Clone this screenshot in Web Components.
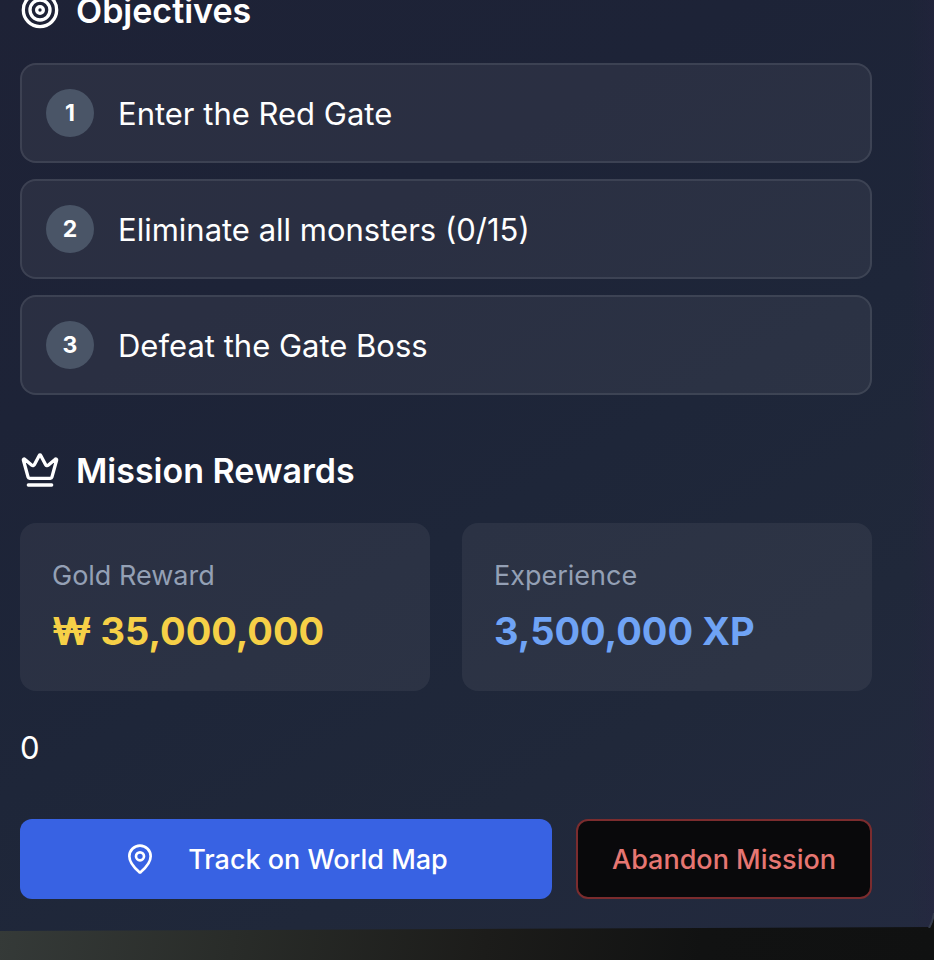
<!DOCTYPE html>
<html lang="en">
<head>
<meta charset="utf-8">
<meta name="viewport" content="width=device-width, initial-scale=1">
<title>Mission details</title>
<style>
  html { background: #101111; }
  body { margin: 0; min-height: 100vh; overflow: hidden; display: flex; font-family: Inter, "Noto Sans CJK KR", sans-serif; color: #fff; }
</style>
</head>
<body>
<mission-panel>
  <mission-section heading="Objectives" icon="target">
    <objective-list>
      <objective-item number="1">Enter the Red Gate</objective-item>
      <objective-item number="2">Eliminate all monsters (0/15)</objective-item>
      <objective-item number="3">Defeat the Gate Boss</objective-item>
    </objective-list>
  </mission-section>
  <mission-section heading="Mission Rewards" icon="crown">
    <reward-grid>
      <reward-card label="Gold Reward" tone="gold">₩ 35,000,000</reward-card>
      <reward-card label="Experience" tone="xp">3,500,000 XP</reward-card>
    </reward-grid>
  </mission-section>
  <mission-count>0</mission-count>
  <mission-actions>
    <action-button variant="primary" icon="pin">Track on World Map</action-button>
    <action-button variant="danger">Abandon Mission</action-button>
  </mission-actions>
</mission-panel>
<script>
const ICONS = {
  target: '<circle cx="12" cy="12" r="10"/><circle cx="12" cy="12" r="6"/><circle cx="12" cy="12" r="2"/>',
  crown: '<path d="M11.562 3.266a.5.5 0 0 1 .876 0L15.39 8.87a1 1 0 0 0 1.516.294L21.183 5.5a.5.5 0 0 1 .798.519l-2.834 10.246a1 1 0 0 1-.956.734H5.81a1 1 0 0 1-.957-.734L2.02 6.02a.5.5 0 0 1 .798-.519l4.276 3.664a1 1 0 0 0 1.516-.294z"/><path d="M5 21h14"/>',
  pin: '<path d="M20 10c0 4.993-5.539 10.193-7.399 11.799a1 1 0 0 1-1.202 0C9.539 20.193 4 14.993 4 10a8 8 0 0 1 16 0"/><circle cx="12" cy="10" r="3"/>'
};
const icon = name => ICONS[name] ? `<svg viewBox="0 0 24 24" fill="none" stroke="currentColor" stroke-width="2" stroke-linecap="round" stroke-linejoin="round" aria-hidden="true">${ICONS[name]}</svg>` : '';

function define(tag, render) {
  customElements.define(tag, class extends HTMLElement {
    constructor() { super(); this.attachShadow({ mode: 'open' }); }
    connectedCallback() { this.shadowRoot.innerHTML = render(this); }
  });
}

define('mission-panel', () => `
  <style>
    :host { flex: 1; display: flex; flex-direction: column; min-width: 0; }
    main {
      display: flex; flex-direction: column; padding: 0 62px 32px 20px; margin-top: -17px;
      background:
        linear-gradient(90deg, transparent calc(100% - 24px), rgba(42, 34, 66, .25)),
        linear-gradient(150deg, #1e2236 0%, #1d2337 30%, #1e2639 55%, #20283a 75%, #232a3f 100%);
    }
    footer {
      position: relative; flex: 1; margin-top: -4px; min-height: 32px;
      background: linear-gradient(100deg, #353a38 0%, #292c29 25%, #1c1c1a 52%, #111212 75%, #101111 100%);
      clip-path: polygon(0 4px, 100% 0, 100% 100%, 0 100%);
    }
    .wrap { position: relative; display: flex; flex-direction: column; flex: 1; }
    .corner { position: absolute; right: 0; bottom: 32px; width: 8px; height: 18px; }
  </style>
  <div class="wrap">
    <main><slot></slot></main>
    <footer></footer>
    <svg class="corner" viewBox="0 0 8 18" aria-hidden="true">
      <path d="M8 6Q7 12 4 18H8Z" fill="#101111"/>
      <path d="M8 3Q7 11 3 18" fill="none" stroke="#343b4c" stroke-width="2"/>
    </svg>
  </div>`);

define('mission-section', el => `
  <style>
    :host { display: block; }
    :host(:not(:first-child)) { margin-top: 48px; }
    h2 { display: flex; align-items: center; gap: 16px; margin: 0 0 26px; font-size: 34px; line-height: 52px; font-weight: 600; white-space: nowrap; }
    h2 span { padding-top: 2px; }
    svg { width: 40px; height: 40px; flex: none; }
  </style>
  <section><h2>${icon(el.getAttribute('icon'))}<span>${el.getAttribute('heading')}</span></h2><slot></slot></section>`);

define('objective-list', () => `
  <style>
    :host { display: block; }
    div { display: flex; flex-direction: column; gap: 16px; }
  </style>
  <div role="list"><slot></slot></div>`);

define('objective-item', el => {
  el.setAttribute('role', 'listitem');
  return `
  <style>
    :host { display: flex; align-items: flex-start; gap: 24px; padding: 24px; border: 2px solid rgba(255, 255, 255, .09); border-radius: 16px; background: rgba(255, 255, 255, .06); font-size: 31px; line-height: 46px; }
    .num { flex: none; width: 48px; height: 48px; border-radius: 50%; background: #4a5567; font-size: 23px; line-height: 48px; font-weight: 700; text-align: center; }
    .text { padding-top: 2px; }
  </style>
  <span class="num">${el.getAttribute('number')}</span><span class="text"><slot></slot></span>`;
});

define('reward-grid', () => `
  <style>:host { display: grid; grid-template-columns: 1fr 1fr; gap: 32px; }</style>
  <slot></slot>`);

define('reward-card', el => `
  <style>
    :host { display: block; padding: 32px; border-radius: 16px; background: rgba(255, 255, 255, .06); --tone: #f6d047; }
    :host([tone="xp"]) { --tone: #6fa3f5; }
    p { margin: 0; white-space: nowrap; }
    .label { padding-top: 2px; margin-bottom: 8px; color: #94a0b5; font-size: 27px; line-height: 38px; }
    .value { color: var(--tone); font-size: 38px; line-height: 56px; font-weight: 700; }
  </style>
  <p class="label">${el.getAttribute('label')}</p><p class="value"><slot></slot></p>`);

define('mission-count', () => `
  <style>:host { display: block; padding-top: 2px; margin-top: 32px; font-size: 31px; line-height: 46px; }</style>
  <slot></slot>`);

define('mission-actions', () => `
  <style>:host { display: flex; gap: 24px; margin-top: 48px; }</style>
  <slot></slot>`);

define('action-button', el => `
  <style>
    :host { display: block; }
    :host([variant="primary"]) { flex: 1; }
    button { display: flex; align-items: center; justify-content: center; gap: 32px; box-sizing: border-box; width: 100%; height: 80px; padding: 0 34px; border: 0; border-radius: 12px; background: #3862e3; color: #fff; font: 500 27px/38px Inter, sans-serif; white-space: nowrap; cursor: pointer; }
    :host([variant="danger"]) button { border: 2px solid #7b2c2e; background: #09090b; color: #e67672; }
    span { padding-top: 2px; }
    svg { width: 32px; height: 32px; flex: none; }
  </style>
  <button type="button">${icon(el.getAttribute('icon'))}<span><slot></slot></span></button>`);
</script>
</body>
</html>
